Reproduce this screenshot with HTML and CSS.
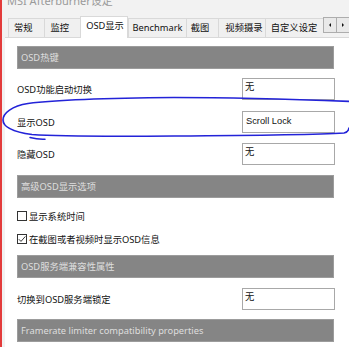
FILE: index.html
```html
<!DOCTYPE html>
<html>
<head>
<meta charset="utf-8">
<link rel="stylesheet" href="styles.css">
</head>
<body>
<div class="window">
  <div class="title">MSI Afterburner设定</div>
  <div class="tabbar">
    <div class="tab t1">常规</div>
    <div class="tab t2">监控</div>
    <div class="tab t3 active">OSD显示</div>
    <div class="tab t4">Benchmark</div>
    <div class="tab t5">截图</div>
    <div class="tab t6">视频摄录</div>
    <div class="tab t7">自定义设定</div>
    <div class="spin">
      <div class="spinbtn"><span class="tri-l"></span></div>
      <div class="spinbtn"><span class="tri-r"></span></div>
    </div>
  </div>
  <div class="panel">
    <div class="header m8">OSD热键</div>
    <div class="row m9"><span class="label">OSD功能启动切换</span><div class="input">无</div></div>
    <div class="row m11"><span class="label">显示OSD</span><div class="input latin">Scroll Lock</div></div>
    <div class="row m10"><span class="label">隐藏OSD</span><div class="input">无</div></div>
    <div class="header m10">高级OSD显示选项</div>
    <div class="check m9"><span class="box"></span><span>显示系统时间</span></div>
    <div class="check m5"><span class="box checked"><svg viewBox="0 0 10 10" width="10" height="10"><path d="M1.8 5.2 L4 7.4 L8.4 2.4" fill="none" stroke="#222" stroke-width="0.9"/></svg></span><span>在截图或者视频时显示OSD信息</span></div>
    <div class="header m7">OSD服务端兼容性属性</div>
    <div class="row m10"><span class="label">切换到OSD服务端锁定</span><div class="input">无</div></div>
    <div class="header m9">Framerate limiter compatibility properties</div>
  </div>
  <svg class="ink" viewBox="0 0 349 347" width="349" height="347">
    <path d="M 351 101.5 C 300 99.5, 230 97.5, 174 97.5 C 110 98, 55 100, 28 103.5 C 12 106, 3 113, 3 120 C 3 127, 14 132, 32 134.5 C 60 136.5, 110 136.5, 174 136 C 250 135.5, 320 134.5, 344 133 C 347 132.5, 348.5 131, 349 128" fill="none" stroke="#2323d8" stroke-width="1.6" stroke-linecap="round"/>
    <path d="M 30 137.5 Q 38 139.6 45 139.2" fill="none" stroke="#2323d8" stroke-width="1.5" stroke-linecap="round"/>
  </svg>
</div>
</body>
</html>
```
FILE: styles.css
```css
html, body {
  margin: 0;
  padding: 0;
}
body {
  width: 349px;
  height: 347px;
  overflow: hidden;
  font-family: "Noto Sans", "Noto Sans CJK SC", sans-serif;
  font-size: 9.3px;
  color: #111;
}
.window {
  position: relative;
  width: 347px;
  height: 347px;
  background: #f2f2f2;
  border-left: 2px solid #e33b3b;
  overflow: hidden;
}
.title {
  height: 12px;
  line-height: 12px;
  margin-top: -5px;
  padding-left: 5px;
  font-size: 11px;
  color: #9a9a9a;
  white-space: nowrap;
}
.tabbar {
  display: flex;
  align-items: flex-end;
  height: 30px;
  padding-left: 6px;
  position: relative;
}
.tab {
  box-sizing: border-box;
  height: 19px;
  line-height: 18px;
  padding-left: 5px;
  background: #f0f0f0;
  border: 1px solid #d9d9d9;
  border-bottom: none;
  border-right: none;
  white-space: nowrap;
  color: #111;
}
.tab.active {
  height: 22px;
  line-height: 17px;
  background: #fff;
  border-right: 1px solid #d9d9d9;
  margin-bottom: -1px;
  position: relative;
  z-index: 2;
}
.t1 { width: 36px; padding-left: 5px; }
.t2 { width: 37px; padding-left: 6px; }
.t3 { width: 48px; padding-left: 5px; }
.t4 { width: 59px; padding-left: 4px; }
.t5 { width: 33px; padding-left: 4px; }
.t6 { width: 47px; padding-left: 6px; }
.t7 { width: 59px; padding-left: 5px; }
.spin {
  display: flex;
  align-self: flex-start;
  margin-top: 10px;
}
.spinbtn {
  box-sizing: border-box;
  width: 14px;
  height: 16px;
  border: 1px solid #adadad;
  background: #e9e9e9;
  display: flex;
  align-items: center;
  justify-content: center;
  margin-right: -1px;
}
.tri-l {
  width: 0;
  height: 0;
  border-top: 2.5px solid transparent;
  border-bottom: 2.5px solid transparent;
  border-right: 2.5px solid #111;
}
.tri-r {
  width: 0;
  height: 0;
  border-top: 2.5px solid transparent;
  border-bottom: 2.5px solid transparent;
  border-left: 2.5px solid #111;
}
.panel {
  background: #fff;
  border-top: 1px solid #d9d9d9;
  margin-left: 3px;
  height: 320px;
  padding-left: 12px;
  display: flex;
  flex-direction: column;
  box-sizing: border-box;
}
.header {
  box-sizing: border-box;
  width: 317px;
  height: 23px;
  line-height: 21px;
  background: #858585;
  border: 1px solid #9c9c9c;
  padding-left: 3px;
  color: #dedede;
  white-space: nowrap;
  overflow: hidden;
}
.row {
  width: 318px;
  height: 22px;
  display: flex;
  align-items: center;
  justify-content: space-between;
}
.label {
  white-space: nowrap;
}
.input {
  box-sizing: border-box;
  width: 93px;
  height: 22px;
  border: 1px solid #a8a8a8;
  background: #fff;
  padding-left: 2px;
  line-height: 16px;
}
.input.latin {
  font-family: "Liberation Sans", "Noto Sans CJK SC", sans-serif;
  padding-left: 3px;
  line-height: 18px;
}
.check {
  height: 18px;
  display: flex;
  align-items: center;
  white-space: nowrap;
}
.box {
  box-sizing: border-box;
  width: 10px;
  height: 10px;
  border: 1px solid #333;
  background: #fff;
  margin-right: 2px;
  position: relative;
}
.box svg {
  position: absolute;
  left: -1px;
  top: -1px;
}
.m5 { margin-top: 5px; }
.m7 { margin-top: 7px; }
.m8 { margin-top: 8px; }
.m9 { margin-top: 9px; }
.m10 { margin-top: 10px; }
.m11 { margin-top: 11px; }
.ink {
  position: absolute;
  left: -2px;
  top: 0;
  pointer-events: none;
}
```
